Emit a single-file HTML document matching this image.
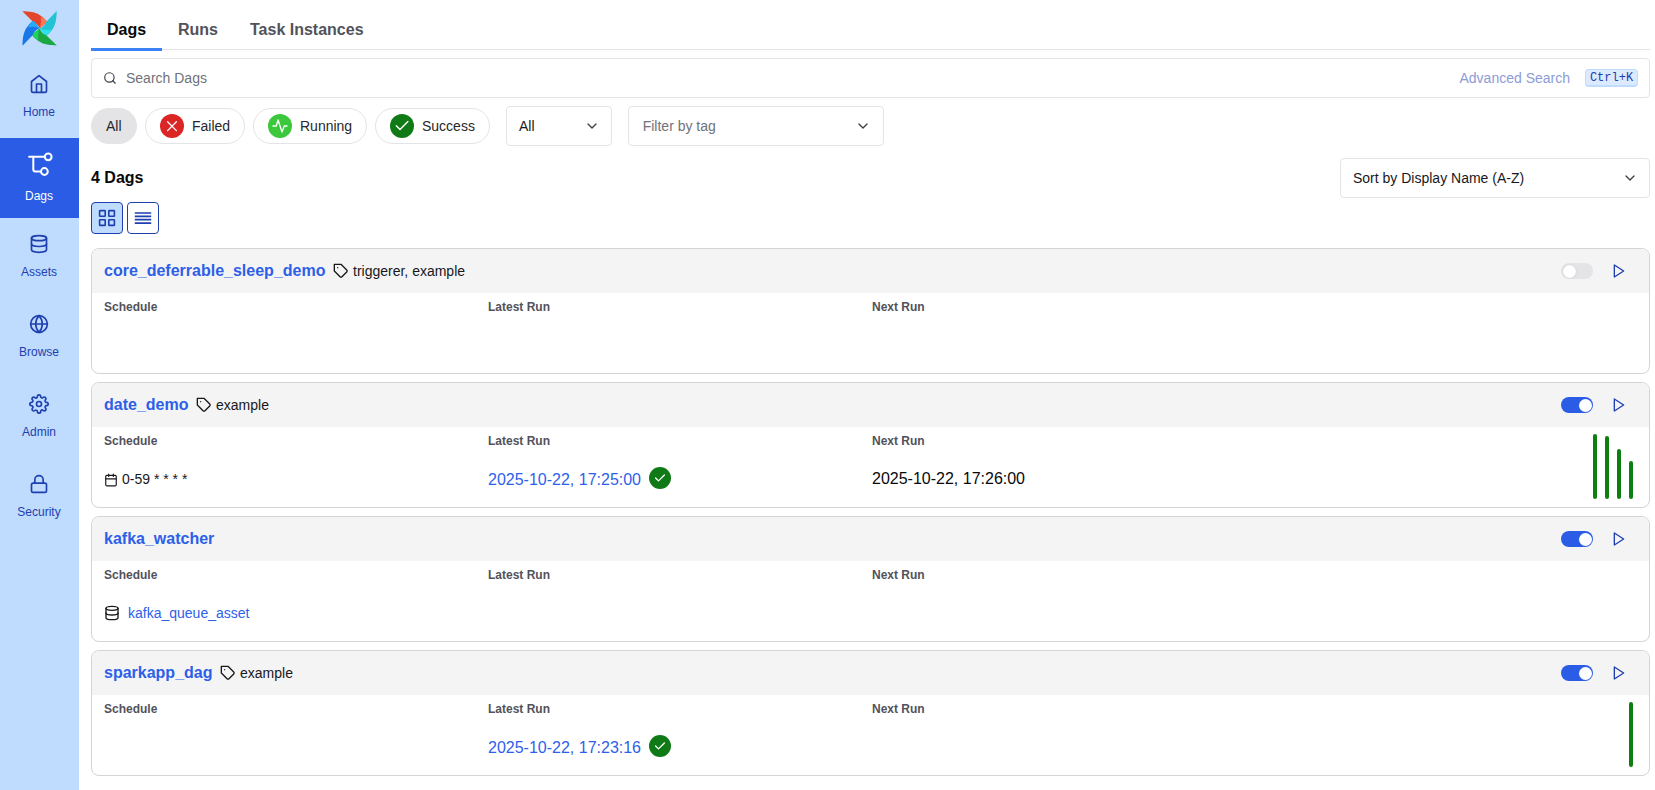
<!DOCTYPE html>
<html><head><meta charset="utf-8">
<style>
*{box-sizing:border-box;margin:0;padding:0}
html,body{width:1655px;height:790px;overflow:hidden;background:#fff;font-family:"Liberation Sans",sans-serif;color:#09090b}
.abs{position:absolute}
svg{display:block}
#side{position:absolute;left:0;top:0;width:79px;height:790px;background:#bfdbfe}
.nav{position:absolute;left:0;width:79px;height:80px;color:#1e3a8a}
.nav .lbl{position:absolute;left:-0.5px;width:79px;text-align:center;font-size:12px;line-height:12px;color:#1e40af}
.nav svg{position:absolute;stroke:#1e40af;fill:none;stroke-width:2;stroke-linecap:round;stroke-linejoin:round}
.nav.act{background:#2b5ce6}
.nav.act .lbl{color:#fff}
.nav.act svg{stroke:#fff}
.tab{position:absolute;top:21px;font-size:16px;font-weight:bold;line-height:18px;color:#52525b}
.box{position:absolute;border:1px solid #e4e4e7;border-radius:4px;background:#fff}
.pill{position:absolute;top:108px;height:36px;border:1px solid #e4e4e7;border-radius:18px;font-size:14px;line-height:34px;color:#27272a;background:#fff}
.pill .ic{position:absolute;top:5px;left:14px;width:24px;height:24px;border-radius:12px}
.pill .t{position:absolute;left:46px;top:0}
.card{position:absolute;left:91px;width:1559px;height:126px;border:1px solid #d4d4d8;border-radius:8px;overflow:hidden;background:#fff}
.card .hd{position:absolute;left:0;top:0;right:0;height:44px;background:#f4f4f5}
.card .title{position:absolute;left:12px;top:13px;font-size:16px;font-weight:bold;line-height:18px;color:#2d5fe8;white-space:nowrap}
.card .tags{position:absolute;top:14px;font-size:14px;line-height:16px;color:#18181b;white-space:nowrap}
.card .tags svg{position:absolute;left:0;top:0}
.card .tags span{position:absolute;left:20px;top:0}
.card .lab{position:absolute;top:51px;font-size:12px;font-weight:bold;line-height:14px;color:#52525b}
.card .tog{position:absolute;left:1469px;top:14px;width:32px;height:16px;border-radius:8px;background:#2b5ce6}
.card .tog i{position:absolute;top:1.5px;left:17.5px;width:13px;height:13px;border-radius:7px;background:#fff}
.card .tog.off{background:#e4e4e7}
.card .tog.off i{left:1.5px;box-shadow:0 0 1.5px rgba(0,0,0,.18)}
.card .play{position:absolute;left:1519px;top:14px}
.bar{position:absolute;width:4px;border-radius:2px;background:#0d7f10}
</style></head><body>

<div id="side">
  <!-- logo -->
  <svg class="abs" style="left:20px;top:8px" width="40" height="40" viewBox="0 0 40 40">
    <g id="bl">
    <path d="M2.3 3.3 C9 3.3 15.5 4.2 20 7.2 C23 9.3 25.6 11.6 27.4 14.1 L19.7 20.3 C18.5 17.4 16.3 14.8 12.7 13.4 Z" fill="#e4462b"/>
    <path d="M20.6 8.6 C23.2 10.2 25.7 12 27.4 14.1 L19.7 20.3 C21.2 16.4 21.6 12.3 20.6 8.6 Z" fill="#fd7656"/>
    </g>
    <g transform="rotate(90 19.6 20.4)"><path d="M2.3 3.3 C9 3.3 15.5 4.2 20 7.2 C23 9.3 25.6 11.6 27.4 14.1 L19.7 20.3 C18.5 17.4 16.3 14.8 12.7 13.4 Z" fill="#20c4d4"/>
    <path d="M20.6 8.6 C23.2 10.2 25.7 12 27.4 14.1 L19.7 20.3 C21.2 16.4 21.6 12.3 20.6 8.6 Z" fill="#2ce1ee"/></g>
    <g transform="rotate(180 19.6 20.4)"><path d="M2.3 3.3 C9 3.3 15.5 4.2 20 7.2 C23 9.3 25.6 11.6 27.4 14.1 L19.7 20.3 C18.5 17.4 16.3 14.8 12.7 13.4 Z" fill="#1ca745"/>
    <path d="M20.6 8.6 C23.2 10.2 25.7 12 27.4 14.1 L19.7 20.3 C21.2 16.4 21.6 12.3 20.6 8.6 Z" fill="#20d35f"/></g>
    <g transform="rotate(270 19.6 20.4)"><path d="M2.3 3.3 C9 3.3 15.5 4.2 20 7.2 C23 9.3 25.6 11.6 27.4 14.1 L19.7 20.3 C18.5 17.4 16.3 14.8 12.7 13.4 Z" fill="#1a77e8"/>
    <path d="M20.6 8.6 C23.2 10.2 25.7 12 27.4 14.1 L19.7 20.3 C21.2 16.4 21.6 12.3 20.6 8.6 Z" fill="#25aaf6"/></g>
  </svg>

  <div class="nav" style="top:58px">
    <svg style="left:29px;top:74px;margin-top:-58px" width="20" height="20" viewBox="0 0 24 24"><path d="M3 9l9-7 9 7v11a2 2 0 0 1-2 2H5a2 2 0 0 1-2-2z"/><polyline points="9 22 9 12 15 12 15 22"/></svg>
    <div class="lbl" style="top:48px">Home</div>
  </div>
  <div class="nav act" style="top:138px">
    <svg style="left:27px;top:12px" width="26" height="26" viewBox="0 0 26 26"><path d="M2.1 6.8H17.2"/><circle cx="21.2" cy="6.8" r="3.4"/><path d="M6.3 6.8V19.5a2 2 0 0 0 2 2H14"/><circle cx="17.4" cy="21.5" r="3.4"/></svg>
    <div class="lbl" style="top:52px">Dags</div>
  </div>
  <div class="nav" style="top:218px">
    <svg style="left:29px;top:16px" width="20" height="20" viewBox="0 0 24 24"><ellipse cx="12" cy="5" rx="9" ry="3"/><path d="M21 12c0 1.66-4 3-9 3s-9-1.34-9-3"/><path d="M3 5v14c0 1.66 4 3 9 3s9-1.34 9-3V5"/></svg>
    <div class="lbl" style="top:48px">Assets</div>
  </div>
  <div class="nav" style="top:298px">
    <svg style="left:29px;top:16px" width="20" height="20" viewBox="0 0 24 24"><circle cx="12" cy="12" r="10"/><line x1="2" y1="12" x2="22" y2="12"/><path d="M12 2a15.3 15.3 0 0 1 4 10 15.3 15.3 0 0 1-4 10 15.3 15.3 0 0 1-4-10 15.3 15.3 0 0 1 4-10z"/></svg>
    <div class="lbl" style="top:48px">Browse</div>
  </div>
  <div class="nav" style="top:378px">
    <svg style="left:29px;top:16px" width="20" height="20" viewBox="0 0 24 24"><circle cx="12" cy="12" r="3"/><path d="M19.4 15a1.650 1.650 0 0 0 .33 1.82l.06.06a2 2 0 0 1 0 2.83 2 2 0 0 1-2.83 0l-.06-.06a1.650 1.650 0 0 0-1.820-.33 1.650 1.650 0 0 0-1 1.51V21a2 2 0 0 1-2 2 2 2 0 0 1-2-2v-.09A1.650 1.650 0 0 0 9 19.4a1.650 1.650 0 0 0-1.820.33l-.06.06a2 2 0 0 1-2.830 0 2 2 0 0 1 0-2.830l.06-.06a1.650 1.650 0 0 0 .33-1.820 1.650 1.650 0 0 0-1.510-1H3a2 2 0 0 1-2-2 2 2 0 0 1 2-2h.09A1.650 1.650 0 0 0 4.600 9a1.650 1.650 0 0 0-.33-1.820l-.06-.06a2 2 0 0 1 0-2.830 2 2 0 0 1 2.830 0l.06.06a1.650 1.650 0 0 0 1.820.33H9a1.650 1.650 0 0 0 1-1.510V3a2 2 0 0 1 2-2 2 2 0 0 1 2 2v.09a1.650 1.650 0 0 0 1 1.510 1.650 1.650 0 0 0 1.820-.33l.06-.06a2 2 0 0 1 2.830 0 2 2 0 0 1 0 2.830l-.06.06a1.650 1.650 0 0 0-.33 1.820V9a1.650 1.650 0 0 0 1.510 1H21a2 2 0 0 1 2 2 2 2 0 0 1-2 2h-.09a1.650 1.650 0 0 0-1.510 1z"/></svg>
    <div class="lbl" style="top:48px">Admin</div>
  </div>
  <div class="nav" style="top:458px">
    <svg style="left:29px;top:16px" width="20" height="20" viewBox="0 0 24 24"><rect x="3" y="11" width="18" height="11" rx="2" ry="2"/><path d="M7 11V7a5 5 0 0 1 10 0v4"/></svg>
    <div class="lbl" style="top:48px">Security</div>
  </div>
</div>

<!-- tabs -->
<div class="abs" style="left:91px;top:49px;width:1559px;height:1px;background:#e4e4e7"></div>
<div class="abs" style="left:91px;top:48px;width:71px;height:3px;background:#3b82f6"></div>
<div class="tab" style="left:107px;color:#09090b">Dags</div>
<div class="tab" style="left:178px">Runs</div>
<div class="tab" style="left:250px">Task Instances</div>

<!-- search -->
<div class="box" style="left:91px;top:58px;width:1559px;height:40px">
  <svg class="abs" style="left:11px;top:12px" width="14" height="14" viewBox="0 0 24 24" fill="none" stroke="#3f3f46" stroke-width="2" stroke-linecap="round" stroke-linejoin="round"><circle cx="11" cy="11" r="8"/><path d="m21 21-4.3-4.3"/></svg>
  <div class="abs" style="left:34px;top:11px;font-size:14px;line-height:16px;color:#71717a">Search Dags</div>
  <div class="abs" style="left:1367.5px;top:11px;font-size:14px;line-height:16px;color:#8b9cd6">Advanced Search</div>
  <div class="abs" style="left:1493px;top:10px;width:53px;height:18px;border:1px solid #bfdbfe;border-bottom-width:2px;background:#dbeafe;border-radius:4px;font-family:'Liberation Mono',monospace;font-size:12px;line-height:16px;color:#1e40af;text-align:center">Ctrl+K</div>
</div>

<!-- pills -->
<div class="pill" style="left:91px;width:46px;background:#e4e4e7;border-color:#e4e4e7"><span class="abs" style="left:14px;top:0">All</span></div>
<div class="pill" style="left:145px;width:100px">
  <div class="ic" style="background:#dc2626"><svg width="24" height="24" viewBox="0 0 24 24" fill="none" stroke="#fff" stroke-width="1.3" stroke-linecap="round"><path d="M7.6 7.8l8.8 8.8M16.4 7.8l-8.8 8.8"/></svg></div>
  <span class="t">Failed</span></div>
<div class="pill" style="left:253px;width:114px">
  <div class="ic" style="background:#3cc83c"><svg width="24" height="24" viewBox="0 0 24 24" fill="none" stroke="#fff" stroke-width="1.3" stroke-linecap="round" stroke-linejoin="round"><path d="M5 12H8.3L10 5.8L14 18L16.3 12H19"/></svg></div>
  <span class="t">Running</span></div>
<div class="pill" style="left:375px;width:115px">
  <div class="ic" style="background:#0f7a16"><svg width="24" height="24" viewBox="0 0 24 24" fill="none" stroke="#fff" stroke-width="1.4" stroke-linecap="round" stroke-linejoin="round"><path d="M6.3 11.8l3.7 3.6 7.9-7.8"/></svg></div>
  <span class="t">Success</span></div>

<!-- selects -->
<div class="box" style="left:506px;top:106px;width:106px;height:40px">
  <div class="abs" style="left:12px;top:11px;font-size:14px;line-height:16px;color:#18181b">All</div>
  <svg class="abs" style="left:77px;top:11px" width="16" height="16" viewBox="0 0 24 24" fill="none" stroke="#3f3f46" stroke-width="2" stroke-linecap="round" stroke-linejoin="round"><path d="m6 9 6 6 6-6"/></svg>
</div>
<div class="box" style="left:628px;top:106px;width:256px;height:40px">
  <div class="abs" style="left:13.7px;top:11px;font-size:14px;line-height:16px;color:#71717a">Filter by tag</div>
  <svg class="abs" style="left:226px;top:11px" width="16" height="16" viewBox="0 0 24 24" fill="none" stroke="#3f3f46" stroke-width="2" stroke-linecap="round" stroke-linejoin="round"><path d="m6 9 6 6 6-6"/></svg>
</div>

<div class="abs" style="left:91px;top:169px;font-size:16px;font-weight:bold;line-height:18px;color:#09090b">4 Dags</div>
<div class="box" style="left:1340px;top:158px;width:310px;height:40px">
  <div class="abs" style="left:12px;top:11px;font-size:14px;line-height:16px;color:#18181b">Sort by Display Name (A-Z)</div>
  <svg class="abs" style="left:281px;top:11px" width="16" height="16" viewBox="0 0 24 24" fill="none" stroke="#3f3f46" stroke-width="2" stroke-linecap="round" stroke-linejoin="round"><path d="m6 9 6 6 6-6"/></svg>
</div>

<!-- view toggles -->
<div class="abs" style="left:91px;top:202px;width:32px;height:32px;border:1px solid #1e40af;border-radius:4px;background:#bfdbfe">
  <svg class="abs" style="left:-1px;top:-1px" width="32" height="32" viewBox="0 0 32 32" fill="none" stroke="#1e40af" stroke-width="1.6"><rect x="8.6" y="8.6" width="5.6" height="5.6" rx="0.5"/><rect x="17.8" y="8.6" width="5.6" height="5.6" rx="0.5"/><rect x="8.6" y="17.8" width="5.6" height="5.6" rx="0.5"/><rect x="17.8" y="17.8" width="5.6" height="5.6" rx="0.5"/></svg>
</div>
<div class="abs" style="left:127px;top:202px;width:32px;height:32px;border:1px solid #1e40af;border-radius:4px;background:#fff">
  <svg class="abs" style="left:-1px;top:-1px" width="32" height="32" viewBox="0 0 32 32" fill="none" stroke="#1e40af" stroke-width="1.7"><path d="M7.8 11H24.2M7.8 14.35H24.2M7.8 17.7H24.2M7.8 21.05H24.2"/></svg>
</div>

<!-- cards -->
<div class="card" style="top:248px">
  <div class="hd"></div>
  <div class="title">core_deferrable_sleep_demo</div>
  <div class="tags" style="left:241px"><svg width="16" height="16" viewBox="0 0 24 24" fill="none" stroke="#18181b" stroke-width="2" stroke-linecap="round" stroke-linejoin="round"><path d="M20.59 13.41l-7.17 7.17a2 2 0 0 1-2.83 0L2 12V2h10l8.59 8.59a2 2 0 0 1 0 2.82z"/><line x1="7" y1="7" x2="7.01" y2="7"/></svg><span>triggerer, example</span></div>
  <div class="tog off"><i></i></div>
  <svg class="play" width="16" height="16" viewBox="0 0 24 24" fill="none" stroke="#1e40af" stroke-width="2" stroke-linecap="round" stroke-linejoin="round"><polygon points="5 3 19 12 5 21 5 3"/></svg>
  <div class="lab" style="left:12px">Schedule</div>
  <div class="lab" style="left:396px">Latest Run</div>
  <div class="lab" style="left:780px">Next Run</div>
</div>

<div class="card" style="top:382px">
  <div class="hd"></div>
  <div class="title">date_demo</div>
  <div class="tags" style="left:104px"><svg width="16" height="16" viewBox="0 0 24 24" fill="none" stroke="#18181b" stroke-width="2" stroke-linecap="round" stroke-linejoin="round"><path d="M20.59 13.41l-7.17 7.17a2 2 0 0 1-2.83 0L2 12V2h10l8.59 8.59a2 2 0 0 1 0 2.82z"/><line x1="7" y1="7" x2="7.01" y2="7"/></svg><span>example</span></div>
  <div class="tog"><i></i></div>
  <svg class="play" width="16" height="16" viewBox="0 0 24 24" fill="none" stroke="#1e40af" stroke-width="2" stroke-linecap="round" stroke-linejoin="round"><polygon points="5 3 19 12 5 21 5 3"/></svg>
  <div class="lab" style="left:12px">Schedule</div>
  <div class="lab" style="left:396px">Latest Run</div>
  <div class="lab" style="left:780px">Next Run</div>
  <svg class="abs" style="left:12px;top:90px" width="14" height="14" viewBox="0 0 24 24" fill="none" stroke="#18181b" stroke-width="2" stroke-linecap="round" stroke-linejoin="round"><rect x="3" y="4" width="18" height="18" rx="2"/><path d="M16 2v4M8 2v4M3 10h18"/></svg>
  <div class="abs" style="left:30px;top:88px;font-size:14px;line-height:16px;color:#18181b">0-59 * * * *</div>
  <div class="abs" style="left:396px;top:88px;font-size:16px;line-height:18px;color:#2e61ea">2025-10-22, 17:25:00</div>
  <div class="abs" style="left:557px;top:84px;width:22px;height:22px;border-radius:11px;background:#0f7a16"><svg width="22" height="22" viewBox="0 0 22 22" fill="none" stroke="#fff" stroke-width="1.3" stroke-linecap="round" stroke-linejoin="round"><path d="M6.6 11l2.9 2.9 5.9-5.9"/></svg></div>
  <div class="abs" style="left:780px;top:87px;font-size:16px;line-height:18px;color:#09090b">2025-10-22, 17:26:00</div>
  <div class="bar" style="left:1501px;top:51px;height:65px"></div>
  <div class="bar" style="left:1513px;top:53px;height:63px"></div>
  <div class="bar" style="left:1525px;top:66px;height:50px"></div>
  <div class="bar" style="left:1537px;top:78px;height:38px"></div>
</div>

<div class="card" style="top:516px">
  <div class="hd"></div>
  <div class="title">kafka_watcher</div>
  <div class="tog"><i></i></div>
  <svg class="play" width="16" height="16" viewBox="0 0 24 24" fill="none" stroke="#1e40af" stroke-width="2" stroke-linecap="round" stroke-linejoin="round"><polygon points="5 3 19 12 5 21 5 3"/></svg>
  <div class="lab" style="left:12px">Schedule</div>
  <div class="lab" style="left:396px">Latest Run</div>
  <div class="lab" style="left:780px">Next Run</div>
  <svg class="abs" style="left:12px;top:88px" width="16" height="16" viewBox="0 0 24 24" fill="none" stroke="#18181b" stroke-width="2" stroke-linecap="round" stroke-linejoin="round"><ellipse cx="12" cy="5" rx="9" ry="3"/><path d="M21 12c0 1.66-4 3-9 3s-9-1.34-9-3"/><path d="M3 5v14c0 1.66 4 3 9 3s9-1.34 9-3V5"/></svg>
  <div class="abs" style="left:36px;top:88px;font-size:14px;line-height:16px;color:#2e61ea">kafka_queue_asset</div>
</div>

<div class="card" style="top:650px">
  <div class="hd"></div>
  <div class="title">sparkapp_dag</div>
  <div class="tags" style="left:128px"><svg width="16" height="16" viewBox="0 0 24 24" fill="none" stroke="#18181b" stroke-width="2" stroke-linecap="round" stroke-linejoin="round"><path d="M20.59 13.41l-7.17 7.17a2 2 0 0 1-2.83 0L2 12V2h10l8.59 8.59a2 2 0 0 1 0 2.82z"/><line x1="7" y1="7" x2="7.01" y2="7"/></svg><span>example</span></div>
  <div class="tog"><i></i></div>
  <svg class="play" width="16" height="16" viewBox="0 0 24 24" fill="none" stroke="#1e40af" stroke-width="2" stroke-linecap="round" stroke-linejoin="round"><polygon points="5 3 19 12 5 21 5 3"/></svg>
  <div class="lab" style="left:12px">Schedule</div>
  <div class="lab" style="left:396px">Latest Run</div>
  <div class="lab" style="left:780px">Next Run</div>
  <div class="abs" style="left:396px;top:88px;font-size:16px;line-height:18px;color:#2e61ea">2025-10-22, 17:23:16</div>
  <div class="abs" style="left:557px;top:84px;width:22px;height:22px;border-radius:11px;background:#0f7a16"><svg width="22" height="22" viewBox="0 0 22 22" fill="none" stroke="#fff" stroke-width="1.3" stroke-linecap="round" stroke-linejoin="round"><path d="M6.6 11l2.9 2.9 5.9-5.9"/></svg></div>
  <div class="bar" style="left:1537px;top:51px;height:65px"></div>
</div>

</body></html>
